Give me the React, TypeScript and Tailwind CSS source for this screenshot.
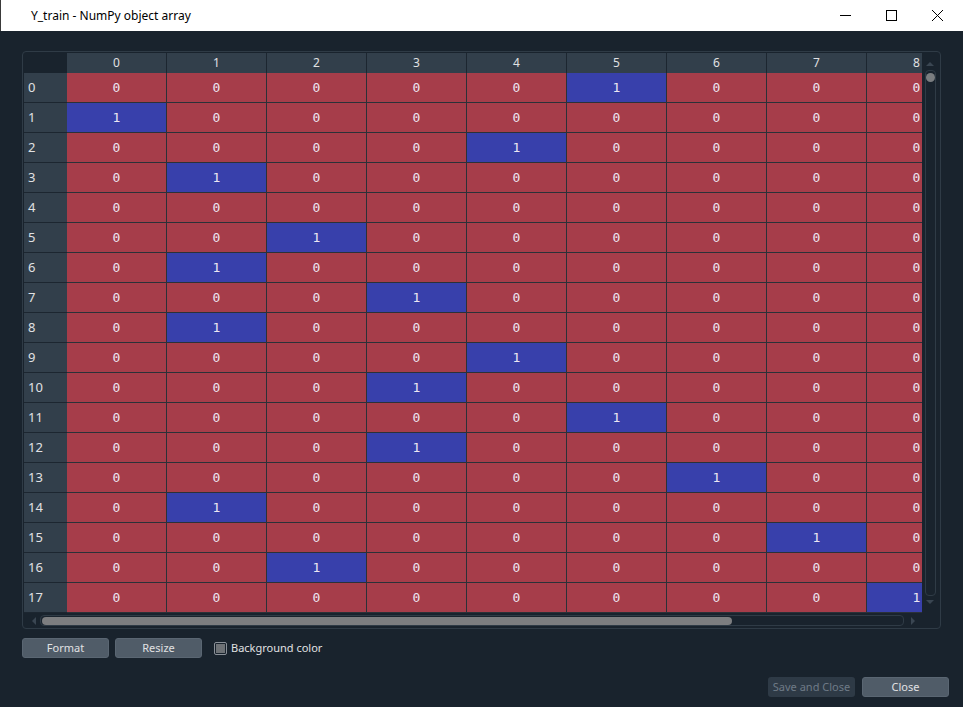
import React from "react";

const blue: Record<number, number> = {
  0: 5, 1: 0, 2: 4, 3: 1, 5: 2, 6: 1, 7: 3, 8: 1, 9: 4, 10: 3, 11: 5, 12: 3, 13: 6, 14: 1, 15: 7, 16: 2, 17: 8,
};
const rows = Array.from({ length: 18 }, (_, i) => i);
const cols = Array.from({ length: 9 }, (_, i) => i);

export default function App() {
  return (
    <div
      className="w-[963px] h-[707px] bg-[#19232d] overflow-hidden flex flex-col"
      style={{ fontFamily: "'Noto Sans', 'Liberation Sans', sans-serif" }}
    >
      {/* title bar */}
      <div className="h-[31px] bg-white flex items-center shrink-0 border-l border-[#3a3a3a]">
        <div className="pl-[30px] text-[12px] text-black flex-1" style={{ fontFamily: "'Noto Sans', sans-serif" }}>
          Y_train - NumPy object array
        </div>
        <div className="flex items-center h-full">
          <div className="w-[46px] h-full flex items-center justify-center">
            <svg width="11" height="11" viewBox="0 0 11 11"><line x1="0" y1="5.5" x2="11" y2="5.5" stroke="#000" strokeWidth="1" /></svg>
          </div>
          <div className="w-[46px] h-full flex items-center justify-center">
            <svg width="11" height="11" viewBox="0 0 11 11"><rect x="0.5" y="0.5" width="10" height="10" fill="none" stroke="#000" strokeWidth="1" /></svg>
          </div>
          <div className="w-[46px] h-full flex items-center justify-center mr-[3px]">
            <svg width="11" height="11" viewBox="0 0 11 11"><path d="M0 0L11 11M11 0L0 11" stroke="#000" strokeWidth="1" /></svg>
          </div>
        </div>
      </div>

      {/* body */}
      <div className="flex-1 flex flex-col pl-[22px] pt-[20px]">
        <div className="w-[919px] h-[578px] border border-[#2f3b46] rounded-[4px] pl-[1px] pt-[1px] flex flex-col">
          <div className="flex">
            {/* table */}
            <div className="w-[898px] overflow-hidden">
              {/* header */}
              <div className="flex h-[20px]">
                <div className="w-[43px] shrink-0 bg-[#19232d]" />
                {cols.map((c) => (
                  <div
                    key={c}
                    className="w-[100px] shrink-0 bg-[#323f4b] border-r border-[#1c2630] flex items-center justify-center text-[12px] text-[#e0e1e3]"
                  >
                    {c}
                  </div>
                ))}
              </div>
              {rows.map((r) => (
                <div key={r} className="flex h-[30px]">
                  <div className="w-[43px] shrink-0 bg-[#323f4b] border-b border-[#1c2630] flex items-center pl-[4px] text-[13px] text-[#e0e1e3]">
                    {r}
                  </div>
                  {cols.map((c) => {
                    const isBlue = blue[r] === c;
                    return (
                      <div
                        key={c}
                        className={
                          "w-[100px] shrink-0 border-r border-b border-[#2b3138] flex items-center justify-center text-[13px] text-[#ece6f2] " +
                          (isBlue ? "bg-[#3840ab]" : "bg-[#a63d4a]")
                        }
                        style={{ fontFamily: "'DejaVu Sans Mono', monospace" }}
                      >
                        {isBlue ? "1" : "0"}
                      </div>
                    );
                  })}
                </div>
              ))}
            </div>
            {/* vertical scrollbar */}
            <div className="w-[16px] h-[560px] flex flex-col items-center">
              <svg width="10" height="10" viewBox="0 0 10 10" className="mt-[6px]"><path d="M1 7L5 3L9 7Z" fill="#3a4652" /></svg>
              <div className="w-[11px] flex-1 border border-[#2f3b46] rounded-[4px] relative my-[1px]">
                <div className="absolute left-[0px] top-[2px] w-[9px] h-[9px] rounded-full bg-[#7a7d80]" />
              </div>
              <svg width="10" height="10" viewBox="0 0 10 10" className="mb-[6px]"><path d="M1 3L5 7L9 3Z" fill="#3a4652" /></svg>
            </div>
          </div>
          {/* horizontal scrollbar */}
          <div className="h-[15px] flex items-center w-[898px]">
            <svg width="10" height="10" viewBox="0 0 10 10" className="ml-[5px]"><path d="M7 1L3 5L7 9Z" fill="#3a4652" /></svg>
            <div className="flex-1 h-[11px] border border-[#2f3b46] rounded-[4px] ml-[1px] flex items-center pl-[1px]">
              <div className="w-[690px] h-[8px] rounded-[4px] bg-[#7d7e80]" />
            </div>
            <svg width="10" height="10" viewBox="0 0 10 10" className="ml-[4px] mr-[4px]"><path d="M3 1L7 5L3 9Z" fill="#3a4652" /></svg>
          </div>
        </div>

        {/* buttons row */}
        <div className="flex items-center mt-[9px] h-[20px]">
          <div className="w-[87px] h-[20px] bg-[#505c68] border border-[#5a6672] rounded-[3px] flex items-center justify-center text-[11px] text-[#e0e1e3]">
            Format
          </div>
          <div className="w-[87px] h-[20px] bg-[#505c68] border border-[#5a6672] rounded-[3px] flex items-center justify-center text-[11px] text-[#e0e1e3] ml-[6px]">
            Resize
          </div>
          <div className="ml-[12px] w-[13px] h-[13px] border border-[#8a9098] rounded-[2px] bg-[#19232d] flex items-center justify-center">
            <div className="w-[9px] h-[9px] bg-[#6e7276]" />
          </div>
          <div className="ml-[4px] text-[11px] text-[#e0e1e3]">Background color</div>
        </div>

        <div className="flex justify-end mt-[19px] pr-[14px]">
          <div className="w-[87px] h-[20px] bg-[#2e3a46] rounded-[3px] flex items-center justify-center text-[11px] text-[#6e7a86]">
            Save and Close
          </div>
          <div className="w-[87px] h-[20px] bg-[#505c68] border border-[#5a6672] rounded-[3px] flex items-center justify-center text-[11px] text-[#e0e1e3] ml-[7px]">
            Close
          </div>
        </div>
      </div>
    </div>
  );
}
